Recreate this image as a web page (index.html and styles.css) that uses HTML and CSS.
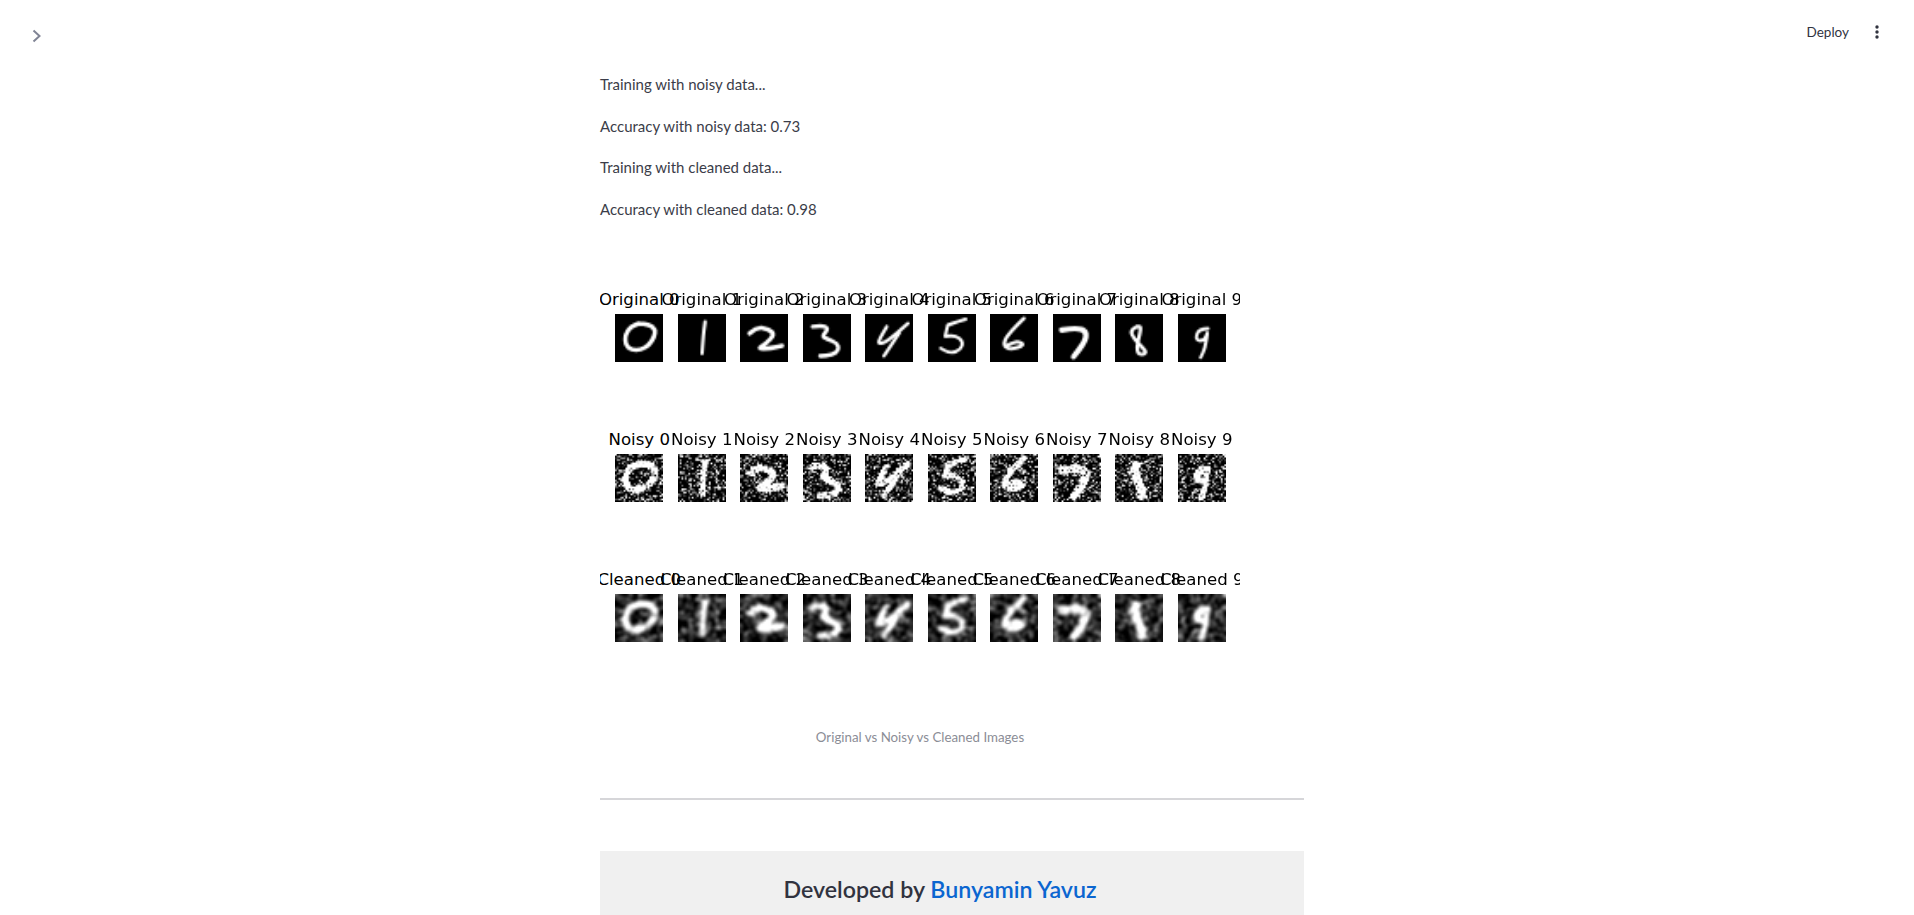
FILE: index.html
```html
<html lang="en">
<head>
    <title>Noise Removal Demo</title>
    <link rel="stylesheet" href="styles.css">
</head>
<body>

<header class="header">
    <svg class="chevron" viewBox="0 0 10 14" width="10" height="14">
        <path d="M1.5 1.5 L7.5 7 L1.5 12.5" fill="none" stroke="#808495" stroke-width="2"/>
    </svg>
    <div class="toolbar">
        <span class="deploy">Deploy</span>
        <svg class="menu" viewBox="0 0 6 16" width="6" height="16">
            <circle cx="3" cy="3" r="1.7"/>
            <circle cx="3" cy="8" r="1.7"/>
            <circle cx="3" cy="13" r="1.7"/>
        </svg>
    </div>
</header>

<main class="content">
    <p>Training with noisy data...</p>
    <p>Accuracy with noisy data: 0.73</p>
    <p>Training with cleaned data...</p>
    <p>Accuracy with cleaned data: 0.98</p>

    <figure class="figure">
        <div class="plot" id="plot"></div>
        <figcaption class="caption">Original vs Noisy vs Cleaned Images</figcaption>
    </figure>

    <hr class="divider">

    <div class="credit">
        <h3>Developed by <a href="#">Bunyamin Yavuz</a></h3>
    </div>
</main>

<script src="app.js"></script>
</body>
</html>
```

FILE: styles.css
```css
:root {
    font-size: 16px;
    --text: #31333f;
    --muted: #8b8d96;
    --link: #0b66d0;
}

* {
    box-sizing: border-box;
}

html, body {
    width: 100%;
    height: 100%;
    margin: 0;
    padding: 0;
    overflow: hidden;
    background: #fff;
    color: var(--text);
    font-family: "Lato", "Noto Sans", sans-serif;
}

a {
    text-decoration: none;
    color: var(--link);
}

.header {
    height: 60px;
    padding: 0 34px 0 32px;
    display: flex;
    align-items: flex-start;
    justify-content: space-between;
}

.chevron {
    margin-top: 29px;
}

.toolbar {
    display: flex;
    align-items: center;
    gap: 25px;
    margin-top: 24px;
}

.deploy {
    font-size: 13.5px;
}

.menu {
    fill: var(--text);
}

.content {
    width: 704px;
    margin: 12px 0 0 600px;
}

.content p {
    margin: 0 0 16px;
    line-height: 25.6px;
    font-size: 15px;
    color: #3b3d49;
}

.figure {
    width: 640px;
    margin: 0;
    padding-top: 52px;
}

.plot {
    padding: 0 7px 0 8px;
    overflow: hidden;
}

.plot-row {
    display: grid;
    grid-template-columns: repeat(10, 1fr);
    margin-bottom: 68px;
}

.plot-cell {
    display: flex;
    flex-direction: column;
    align-items: center;
    min-width: 0;
}

.plot-title {
    height: 20px;
    line-height: 20px;
    margin-bottom: 4px;
    white-space: nowrap;
    color: #000;
    font-family: "DejaVu Sans", sans-serif;
    font-size: 16.6px;
}

.plot-cell canvas {
    width: 48px;
    height: 48px;
    display: block;
}

.caption {
    margin-top: 16px;
    text-align: center;
    line-height: 22px;
    font-size: 13.3px;
    color: var(--muted);
}

.divider {
    margin: 50px 0 51px;
    border: 0;
    border-top: 2px solid #d6d6d9;
}

.credit {
    background: #f0f0f0;
    height: 120px;
    padding: 20px 24px 0 0;
    text-align: center;
}

.credit h3 {
    margin: 0;
    font-size: 23.2px;
    font-weight: 600;
    line-height: 36px;
}
```

FILE: app.js
```js
document.addEventListener('DOMContentLoaded', function () {
    // Stroke data for each digit, in 28x28 image cells
    // A repeated point keeps a sharp corner in the curve
    const digits = [
        {width: 2.5, strokes: [[[14, 5.5], [20, 6], [23.5, 9], [23, 13], [20, 18], [15, 21], [9.5, 21], [6, 18], [6, 12], [9, 7.5], [14, 5.5]]]},
        {width: 2, strokes: [[[15.8, 4.5], [15, 10], [14.5, 16], [14, 23]]]},
        {width: 2.6, strokes: [[[5.6, 11.3], [9.7, 7.4], [17, 9], [20, 12], [15.5, 17], [10, 20.5], [18, 20], [24.5, 18.5]]]},
        {width: 2.4, strokes: [[[5.6, 7.4], [11, 6.5], [15, 8.5], [11, 13], [14, 14.5], [20, 17], [21, 21], [17, 24], [10, 24.5]]]},
        {width: 2, strokes: [[[12.6, 7.4], [8, 15], [8, 17.5], [13, 16], [25, 5.5]], [[20, 11], [11, 24.5]]]},
        {width: 1.9, strokes: [[[22, 3], [17, 4.5], [11.5, 6.5], [11.5, 6.5], [10, 13], [10, 13], [16, 12.5], [20.6, 16], [19, 21], [13, 23], [7.4, 20]]]},
        {width: 2.1, strokes: [[[19.8, 2.5], [10.7, 11.3], [7.4, 18], [11.7, 21], [20.4, 18], [16, 15.7], [10.7, 18]]]},
        {width: 3.2, strokes: [[[5, 9.3], [13.8, 7.8], [19.6, 10.3], [18.7, 16], [12, 24.9]]]},
        {width: 2.1, strokes: [[[12.6, 7.4], [8.8, 9.3], [10.7, 14], [16.5, 20], [18.5, 22.8], [13.7, 24], [12.6, 19], [14.6, 11.3], [15, 7], [12.6, 7.4]]]},
        {width: 1.9, strokes: [[[17.5, 8.5], [12, 8.5], [10, 15.5], [15.8, 15.5], [17.5, 9], [15.8, 20], [13.2, 25.3]]]}
    ];
    const blob8 = [[[12, 7], [10, 10], [13, 15], [16, 20], [15, 24]]];

    // Small seeded generator so that the noise is the same on every load
    let seed = 12345;
    function random() {
        seed = (seed * 1664525 + 1013904223) % 4294967296;
        return seed / 4294967296;
    }

    function randomNormal() {
        return Math.sqrt(-2 * Math.log(random() + 1e-9)) * Math.cos(2 * Math.PI * random());
    }

    function drawStrokes(ctx, strokes, width) {
        ctx.clearRect(0, 0, 28, 28);
        ctx.fillStyle = "#000";
        ctx.fillRect(0, 0, 28, 28);
        ctx.strokeStyle = "#fff";
        ctx.lineWidth = width;
        ctx.lineCap = "round";
        ctx.lineJoin = "round";
        strokes.forEach(function (points) {
            ctx.beginPath();
            ctx.moveTo(points[0][0], points[0][1]);
            for (let i = 1; i < points.length - 1; i++) {
                const midX = (points[i][0] + points[i + 1][0]) / 2;
                const midY = (points[i][1] + points[i + 1][1]) / 2;
                ctx.quadraticCurveTo(points[i][0], points[i][1], midX, midY);
            }
            const last = points[points.length - 1];
            ctx.lineTo(last[0], last[1]);
            ctx.stroke();
        });
    }

    function readPixels(ctx) {
        const data = ctx.getImageData(0, 0, 28, 28).data;
        const out = [];
        for (let i = 0; i < 784; i++) out.push(data[i * 4] / 255);
        return out;
    }

    function writePixels(ctx, pixels) {
        const image = ctx.createImageData(28, 28);
        pixels.forEach(function (value, i) {
            const level = Math.max(0, Math.min(1, value)) * 255;
            image.data[i * 4] = level;
            image.data[i * 4 + 1] = level;
            image.data[i * 4 + 2] = level;
            image.data[i * 4 + 3] = 255;
        });
        ctx.putImageData(image, 0, 0);
    }

    function blur(pixels) {
        const kernel = [1, 2, 1];
        const out = [];
        for (let y = 0; y < 28; y++) {
            for (let x = 0; x < 28; x++) {
                let sum = 0, total = 0;
                for (let dy = -1; dy <= 1; dy++) {
                    for (let dx = -1; dx <= 1; dx++) {
                        const nx = x + dx, ny = y + dy;
                        if (nx < 0 || ny < 0 || nx > 27 || ny > 27) continue;
                        const weight = kernel[dx + 1] * kernel[dy + 1];
                        sum += pixels[ny * 28 + nx] * weight;
                        total += weight;
                    }
                }
                out.push(sum / total);
            }
        }
        return out;
    }

    function makeNoisy(ctx, digit, index) {
        const strokes = index === 8 ? blob8 : digit.strokes;
        drawStrokes(ctx, strokes, index === 8 ? 5.5 : digit.width + 1.4);
        return readPixels(ctx).map(function (value) {
            return value * 1.6 + randomNormal() * 0.6 - 0.05;
        }).map(function (value) {
            return Math.max(0, Math.min(1, value));
        });
    }

    function makeCell(title) {
        const cell = document.createElement("div");
        cell.className = "plot-cell";
        const label = document.createElement("div");
        label.className = "plot-title";
        label.innerText = title;
        cell.appendChild(label);
        const canvas = document.createElement("canvas");
        canvas.width = 28;
        canvas.height = 28;
        cell.appendChild(canvas);
        return {cell, ctx: canvas.getContext("2d", {willReadFrequently: true})};
    }

    // Build the three rows of the plot
    const plot = document.getElementById("plot");
    const rows = {Original: [], Noisy: [], Cleaned: []};
    Object.keys(rows).forEach(function (name) {
        const row = document.createElement("div");
        row.className = "plot-row";
        digits.forEach(function (digit, i) {
            const made = makeCell(name + " " + i);
            row.appendChild(made.cell);
            rows[name].push(made.ctx);
        });
        plot.appendChild(row);
    });

    digits.forEach(function (digit, i) {
        drawStrokes(rows.Original[i], digit.strokes, digit.width);

        const noisy = makeNoisy(rows.Noisy[i], digit, i);
        writePixels(rows.Noisy[i], noisy);

        // Cleaned row is a smoothed copy of the noisy one
        const cleaned = blur(blur(noisy)).map(function (value) {
            return (value - 0.08) * 1.25;
        });
        writePixels(rows.Cleaned[i], cleaned);
    });
});
```
